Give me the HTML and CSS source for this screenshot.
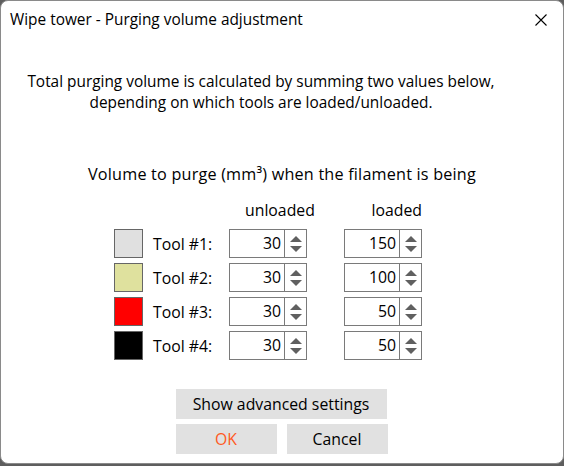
FILE: index.html
```html
<!DOCTYPE html>
<html>
<head>
<meta charset="utf-8">
<link rel="stylesheet" href="styles.css">
</head>
<body>
<div class="window">
  <div class="titlebar">
    <span class="title">Wipe tower - Purging volume adjustment</span>
    <svg class="close" width="12" height="12" viewBox="0 0 12 12"><path d="M0.5 0.5 L11.5 11.5 M11.5 0.5 L0.5 11.5" stroke="#000" stroke-width="1.1" fill="none"/></svg>
  </div>
  <div class="content">
    <p class="intro">Total purging volume is calculated by summing two values below,<br>depending on which tools are loaded/unloaded.</p>
    <p class="heading">Volume to purge (mm³) when the filament is being</p>
    <div class="grid">
      <div></div><div></div>
      <div class="colhead unl">unloaded</div>
      <div class="colhead ld">loaded</div>

      <div class="swatch s1"></div><div class="label">Tool #1:</div>
      <div class="spin"><span class="val">30</span><span class="arrows"><i class="up"></i><i class="dn"></i></span></div>
      <div class="spin"><span class="val">150</span><span class="arrows"><i class="up"></i><i class="dn"></i></span></div>

      <div class="swatch s2"></div><div class="label">Tool #2:</div>
      <div class="spin"><span class="val">30</span><span class="arrows"><i class="up"></i><i class="dn"></i></span></div>
      <div class="spin"><span class="val">100</span><span class="arrows"><i class="up"></i><i class="dn"></i></span></div>

      <div class="swatch s3"></div><div class="label">Tool #3:</div>
      <div class="spin"><span class="val">30</span><span class="arrows"><i class="up"></i><i class="dn"></i></span></div>
      <div class="spin"><span class="val">50</span><span class="arrows"><i class="up"></i><i class="dn"></i></span></div>

      <div class="swatch s4"></div><div class="label">Tool #4:</div>
      <div class="spin"><span class="val">30</span><span class="arrows"><i class="up"></i><i class="dn"></i></span></div>
      <div class="spin"><span class="val">50</span><span class="arrows"><i class="up"></i><i class="dn"></i></span></div>
    </div>
    <div class="buttons">
      <div class="btn wide">Show advanced settings</div>
      <div class="row">
        <div class="btn ok">OK</div>
        <div class="btn">Cancel</div>
      </div>
    </div>
  </div>
</div>
</body>
</html>
```
FILE: styles.css
```css
html, body {
  margin: 0;
  padding: 0;
  background: #5e5e5e;
}
body {
  width: 564px;
  height: 466px;
  font-family: "Open Sans", "Noto Sans", sans-serif;
  font-size: 15.8px;
  color: #000;
}
.window {
  box-sizing: border-box;
  width: 564px;
  height: 464px;
  background: #fff;
  border: 1px solid #8a8a8a;
  border-radius: 8px;
  overflow: hidden;
}
.titlebar {
  height: 38px;
  display: flex;
  align-items: center;
  justify-content: space-between;
  padding: 0 16px 0 9px;
}
.title {
  font-size: 15.4px;
  line-height: 20px;
}
.close {
  display: block;
}
.content {
  display: flex;
  flex-direction: column;
  align-items: center;
}
.intro {
  margin: 32px 42px 0 0;
  font-size: 15.4px;
  text-align: center;
  line-height: 21px;
}
.heading {
  margin: 51px 0 0;
  font-size: 16.2px;
  letter-spacing: 0.2px;
  line-height: 20px;
  text-align: center;
}
.grid {
  margin: 16px 0 0 -28px;
  display: grid;
  grid-template-columns: 39px 76px 115px 78px;
  grid-template-rows: 24px repeat(4, 29px);
  row-gap: 5px;
}
.colhead {
  line-height: 20px;
}
.unl {
  padding-left: 16px;
}
.ld {
  text-align: right;
}
.swatch {
  box-sizing: border-box;
  width: 29px;
  height: 29px;
  border: 1px solid #666;
}
.s1 { background: #e0e0e0; }
.s2 { background: #dfe19e; }
.s3 { background: #ff0000; }
.s4 { background: #000000; }
.label {
  display: flex;
  align-items: center;
}
.spin {
  box-sizing: border-box;
  width: 78px;
  height: 29px;
  border: 1px solid #7a7a7a;
  display: flex;
}
.val {
  flex: 1;
  text-align: right;
  padding-right: 3px;
  line-height: 27px;
  border-right: 1px solid #7a7a7a;
}
.arrows {
  width: 21px;
  display: flex;
  flex-direction: column;
  align-items: center;
  justify-content: center;
  gap: 4px;
}
.arrows i {
  display: block;
  width: 0;
  height: 0;
  border-left: 6px solid transparent;
  border-right: 6px solid transparent;
}
.arrows .up { border-bottom: 6px solid #606060; }
.arrows .dn { border-top: 6px solid #606060; }
.buttons {
  margin: 29px 0 0 -1px;
  display: flex;
  flex-direction: column;
  gap: 5px;
}
.row {
  display: flex;
  gap: 10px;
}
.btn {
  box-sizing: border-box;
  height: 30px;
  width: 101px;
  background: #e1e1e1;
  display: flex;
  align-items: center;
  justify-content: center;
}
.btn.wide {
  width: 211px;
}
.btn.ok {
  color: #ff5a1e;
}
```
